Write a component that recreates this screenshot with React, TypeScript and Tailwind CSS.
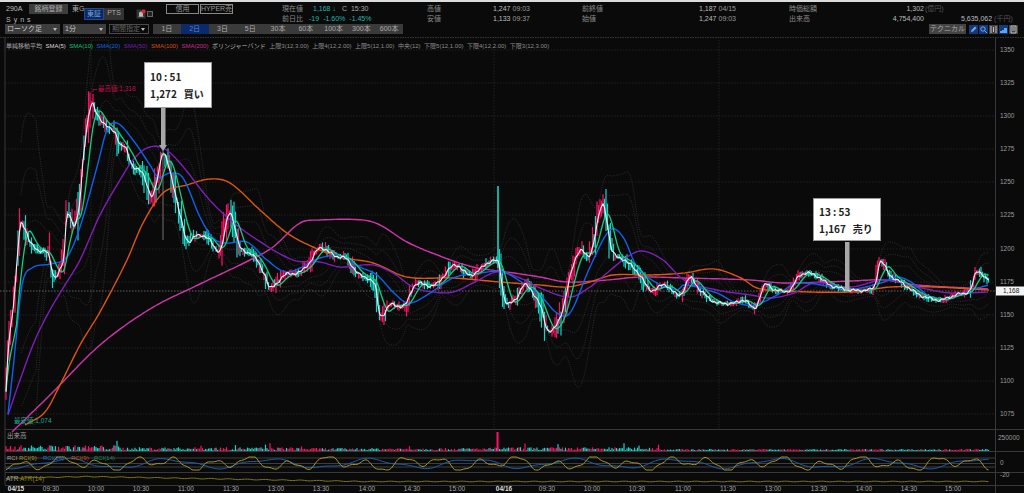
import React from "react";

type P = [number, number];

const white: P[] = [[5,414],[8,352],[14,300],[20,228],[24,226],[30,242],[38,250],[48,254],[54,276],[60,270],[64,256],[67,214],[75,226],[80,200],[83,160],[88,120],[92,104],[95,110],[105,125],[115,132],[120,145],[126,148],[133,167],[143,173],[152,197],[158,175],[163,153],[173,183],[180,215],[187,240],[196,236],[207,237],[220,250],[230,213],[240,247],[253,255],[265,275],[270,288],[285,275],[300,272],[310,262],[320,248],[335,256],[345,258],[360,275],[375,285],[380,315],[390,305],[405,305],[415,285],[435,285],[455,265],[470,275],[498,262],[505,300],[515,300],[525,285],[540,305],[548,330],[560,318],[572,270],[580,250],[590,255],[603,205],[612,250],[625,260],[640,275],[650,290],[665,285],[680,295],[690,278],[700,290],[715,302],[735,303],[745,300],[755,308],[765,285],[775,290],[790,290],[800,275],[815,275],[830,285],[850,290],[865,290],[875,285],[880,262],[890,275],[905,285],[920,295],[940,300],[955,295],[970,290],[977,272],[988,280]];
const blue: P[] = [[8,414],[14,360],[22,285],[32,268],[50,264],[67,257],[80,227],[97,167],[107,130],[117,123],[133,140],[150,165],[158,177],[170,173],[183,178],[200,217],[213,238],[227,243],[247,242],[267,260],[285,272],[300,268],[320,258],[340,256],[360,267],[377,275],[393,292],[408,303],[427,295],[453,278],[480,273],[503,272],[523,283],[540,295],[557,313],[570,313],[590,267],[610,230],[623,237],[637,267],[657,283],[677,290],[684,285],[717,293],[734,302],[754,305],[777,295],[797,283],[851,289],[884,282],[897,277],[911,282],[931,297],[951,298],[971,290],[989,285]];
const purple: P[] = [[8,415],[20,380],[35,340],[50,310],[65,285],[80,260],[100,215],[120,180],[133,160],[147,148],[163,148],[180,163],[207,197],[227,217],[253,237],[293,260],[320,262],[340,267],[373,265],[393,273],[413,287],[433,292],[453,292],[473,283],[497,272],[520,278],[540,288],[570,297],[590,287],[607,273],[627,257],[642,251],[663,260],[684,280],[717,290],[751,295],[770,298],[794,293],[814,283],[851,287],[884,280],[917,287],[950,293],[989,292]];
const orange: P[] = [[25,425],[45,412],[60,385],[80,345],[100,312],[127,260],[143,223],[163,193],[187,185],[210,179],[230,183],[260,210],[287,233],[313,247],[340,257],[373,263],[407,277],[453,278],[500,282],[540,285],[567,287],[590,282],[613,275],[650,275],[684,273],[714,269],[741,278],[757,288],[784,291],[851,292],[891,287],[934,287],[989,290]];
const pink: P[] = [[12,432],[50,395],[100,345],[150,309],[200,284],[250,260],[273,247],[300,223],[320,220],[363,220],[380,225],[407,242],[440,256],[473,267],[507,272],[540,277],[567,282],[607,280],[640,277],[684,278],[751,280],[784,283],[851,281],[884,280],[917,285],[989,289]];

function at(pts: P[], x: number): number {
  if (x <= pts[0][0]) return pts[0][1];
  const n = pts.length;
  if (x >= pts[n - 1][0]) return pts[n - 1][1];
  let i = 0;
  while (pts[i + 1][0] < x) i++;
  const p1 = pts[i], p2 = pts[i + 1];
  const p0 = pts[Math.max(i - 1, 0)], p3 = pts[Math.min(i + 2, n - 1)];
  const d = p2[0] - p1[0];
  const t = (x - p1[0]) / d;
  const m1 = ((p2[1] - p0[1]) / (p2[0] - p0[0] || 1)) * d;
  const m2 = ((p3[1] - p1[1]) / (p3[0] - p1[0] || 1)) * d;
  const t2 = t * t, t3 = t2 * t;
  return (2 * t3 - 3 * t2 + 1) * p1[1] + (t3 - 2 * t2 + t) * m1 + (-2 * t3 + 3 * t2) * p2[1] + (t3 - t2) * m2;
}

let seed = 7;
const rnd = () => {
  seed = (seed * 16807) % 2147483647;
  return (seed - 1) / 2147483646;
};

const xs: number[] = [];
for (let x = 6; x <= 989; x += 1.5) xs.push(x);
const ws = xs.map((x) => at(white, x));

const line = (a: number[], from = 0) =>
  a.map((y, i) => (i < from ? "" : `${i === from ? "M" : "L"}${xs[i].toFixed(1)} ${y.toFixed(1)}`)).join("");
const curve = (pts: P[]) => {
  let d = "";
  for (let x = pts[0][0]; x <= pts[pts.length - 1][0]; x += 2) d += `${d ? "L" : "M"}${x} ${at(pts, x).toFixed(1)}`;
  return d;
};
const avg = (k: number) =>
  ws.map((_, i) => {
    const s = ws.slice(Math.max(0, i - k), i + 1);
    return s.reduce((a, b) => a + b, 0) / s.length;
  });
const green = avg(7);
const jitter = ws.map((y, i) => y + Math.sin(i * 1.7) * 0.9 + Math.sin(i * 0.63) * 0.9);

const bands: string[] = [];
{
  const win = 20;
  const mean = ws.map((_, i) => {
    const s = ws.slice(Math.max(0, i - win), i + 1);
    return s.reduce((a, b) => a + b, 0) / s.length;
  });
  const dev = ws.map((_, i) => {
    const s = ws.slice(Math.max(0, i - win), i + 1);
    const v = s.reduce((a, b) => a + (b - mean[i]) ** 2, 0) / s.length;
    return Math.sqrt(v) + 1.5;
  });
  for (const k of [-3, -2, -1, 1, 2, 3]) {
    bands.push(line(mean.map((m, i) => Math.min(425, Math.max(40, m + k * dev[i]))), 10));
  }
}

const candles = xs.map((x, i) => {
  const y = ws[i];
  const slope = Math.abs(ws[Math.min(i + 1, ws.length - 1)] - y);
  const amp = Math.min(22, 3 + slope * 2.8) * (x < 660 ? 1.15 : 0.8);
  const up = i > 0 ? ws[i] <= ws[i - 1] : true;
  const isPink = rnd() < (up ? 0.85 : 0.22);
  const h1 = rnd() * amp + 0.8;
  const h2 = rnd() * amp + 0.8;
  return { x, y1: y - h1, y2: y + h2, c: isPink ? "#ff0f63" : "#14d6c8" };
});

const volumes = xs.map((x, i) => {
  let env = 1.2;
  if (x < 120) env = 5;
  else if (x < 300) env = 3;
  else if (x < 490) env = 2.2;
  else if (x < 660) env = 3;
  let h = 0.8 + rnd() * env;
  if (rnd() > 0.975 && x < 660) h += env * 1.4;
  return { x, h, c: candles[i].c };
});

const rsiY = xs.map((x) =>
  Math.max(457, Math.min(470, 463.5 + 4.6 * Math.sin(x * 0.165 + 1) + 3 * Math.sin(x * 0.071) + 1.4 * Math.sin(x * 0.39)))
);
const rsiB = xs.map((x) => Math.max(458, Math.min(469, 463.5 + 4.2 * Math.sin(x * 0.062 + 0.6) + 1.3 * Math.sin(x * 0.15))));
const atrY = xs.map((x) => {
  const base = x < 85 ? 478 - (x - 15) * 0.02 : 476.5 + Math.min(5, (x - 85) * 0.018);
  return base + Math.sin(x * 0.35) * 0.35;
});

const priceTicks: [string, number][] = [["1350",50],["1325",83],["1300",116],["1275",149],["1250",182],["1225",215],["1200",249],["1175",282],["1150",315],["1125",348],["1100",381],["1075",414]];
const times: [string, number][] = [["09:30",51],["10:00",96],["10:30",141],["11:00",186],["11:30",231],["13:00",276],["13:30",321],["14:00",367],["14:30",412],["15:00",457],["09:30",547],["10:00",592],["10:30",637],["11:00",683],["11:30",728],["13:00",773],["13:30",819],["14:00",864],["14:30",909],["15:00",953]];

function Cell({ children, className = "" }: { children: React.ReactNode; className?: string }) {
  return <div className={`whitespace-nowrap ${className}`}>{children}</div>;
}

function Val({ v, t }: { v: string; t: string }) {
  return (
    <Cell className="text-[#bdbdbd]">
      {v} <span className="text-[#9a9a9a]">{t}</span>
    </Cell>
  );
}

const tabs = ["1日", "2日", "3日", "5日", "30本", "60本", "100本", "300本", "600本"];

function Select({ label, w, dim }: { label: string; w: string; dim?: boolean }) {
  return (
    <div className={`${w} h-[10px] flex items-center justify-between px-[2px] ${dim ? "border border-[#4a4a4a] text-[#666]" : "bg-[#3d3d3d] text-[#c4c4c4]"}`}>
      <span>{label}</span>
      <span className="w-0 h-0 border-x-[2px] border-x-transparent border-t-[3px] border-t-[#bbb] mr-[1px]" />
    </div>
  );
}

function Legend() {
  return (
    <div className="absolute left-[6px] top-[5px] flex gap-[3.500px] text-[6px] leading-[9px] whitespace-nowrap text-[#8d8d8d]">
      <span className="text-[#a8a8a8]">単純移動平均</span>
      <span className="text-[#d8d8d8]">SMA(5)</span>
      <span className="text-[#0fc070]">SMA(10)</span>
      <span className="text-[#1464e0]">SMA(20)</span>
      <span className="text-[#7a1cb0]">SMA(50)</span>
      <span className="text-[#d8500c]">SMA(100)</span>
      <span className="text-[#c82a94]">SMA(200)</span>
      <span className="text-[#b8b8b8]">ボリンジャーバンド</span>
      <span>上限3(12,3.00)</span>
      <span>上限4(12,2.00)</span>
      <span>上限5(12,1.00)</span>
      <span>中央(12)</span>
      <span>下限5(12,1.00)</span>
      <span>下限4(12,2.00)</span>
      <span>下限3(12,3.00)</span>
    </div>
  );
}

function Callout({ className, time, text }: { className: string; time: string; text: string }) {
  return (
    <div className={`absolute bg-white border border-[#999] px-[5px] font-['Noto_Sans_CJK_JP','Noto_Sans',sans-serif] font-semibold text-[10px] text-[#222] flex flex-col justify-center gap-[4px] leading-[13px] ${className}`}>
      <div>{time}</div>
      <div className="whitespace-pre">{text}</div>
    </div>
  );
}

export default function App() {
  return (
    <div className="w-[1024px] h-[493px] overflow-hidden bg-[#0a0a0a] flex flex-col border-t-[2px] border-[#dcdcdc] text-[7px] leading-[10px] text-[#8a8a8a] font-['Liberation_Sans','Noto_Sans_CJK_JP',sans-serif]">
      <header className="h-[35px] shrink-0 flex flex-col">
        <div className="h-[21px] flex">
          <div className="w-[78px] ml-[6px] flex flex-col">
            <div className="flex items-center gap-[4px] mt-[2px] h-[10px] whitespace-nowrap">
              <span className="text-[#bbb] w-[19px] shrink-0">290A</span>
              <span className="w-[39px] shrink-0 h-[10px] bg-[#3d3d3d] text-center text-[#a8a8a8]">銘柄登録</span>
              <span className="text-[#aaa] shrink-0">東G</span>
            </div>
            <div className="mt-[1px] text-[#bbb] tracking-[3px]">Syns</div>
          </div>
          <div className="w-[40px] h-[12px] mt-[6px] flex text-center">
            <span className="w-[20px] bg-[#0b2a63] border border-[#234a8c] text-[#7aa0d8]">東証</span>
            <span className="w-[20px] bg-[#333] text-[#aaa]">PTS</span>
          </div>
          <div className="ml-[12px] mt-[6px] flex items-center gap-[1px] h-[12px]">
            <svg width="10" height="10" viewBox="0 0 10 10">
              <rect x="0.5" y="0.5" width="9" height="9" fill="#333" />
              <path d="M3 7V4.500a2 2 0 0 1 4 0V7l.8.8H2.200z" fill="#bbb" />
              <circle cx="7.500" cy="2.400" r="2" fill="#e8222e" />
            </svg>
            <span className="w-[6px] h-[6px] bg-[#222] border border-[#666]" />
          </div>
          <div className="ml-[13px] mt-[2px] flex gap-[1px] text-center text-[#999] whitespace-nowrap">
            <span className="w-[33px] h-[10px] border border-[#888] leading-[8px]">信用</span>
            <span className="w-[33px] h-[10px] border border-[#888] leading-[8px]">HYPER売</span>
          </div>
          <div className="ml-[49px] mt-[2px] grid grid-cols-[27px_118px_66px_89px_117px_90px_135px_1fr] grid-rows-[10px_10px] flex-1">
            <Cell>現在値</Cell>
            <Cell className="flex pl-[4px] text-[#20b8a8]">
              <span className="w-[29px]">1,168 ↓</span>
              <span className="text-[#a8a8a8]">C&nbsp;&nbsp;15:30</span>
            </Cell>
            <Cell>高値</Cell>
            <Val v="1,247" t="09:03" />
            <Cell>前終値</Cell>
            <Val v="1,187" t="04/15" />
            <Cell className="flex justify-between">
              <span>時価総額</span>
              <span className="text-[#bdbdbd]">1,302</span>
            </Cell>
            <Cell className="pl-[1px] text-[#555]">(億円)</Cell>

            <Cell>前日比</Cell>
            <Cell className="flex gap-[4px] text-[#20b8a8]">
              <span>-19</span>
              <span>-1.60%</span>
              <span>-1.45%</span>
            </Cell>
            <Cell>安値</Cell>
            <Val v="1,133" t="09:37" />
            <Cell>始値</Cell>
            <Val v="1,247" t="09:03" />
            <Cell className="flex justify-between">
              <span>出来高</span>
              <span className="text-[#bdbdbd]">4,754,400</span>
            </Cell>
            <Cell className="pl-[37px] text-[#bdbdbd]">
              5,635,062 <span className="text-[#555]">(千円)</span>
            </Cell>
          </div>
        </div>
        <div className="h-[10px] mt-[1px] flex items-center">
          <div className="ml-[5px] flex gap-[3px]">
            <Select label="ローソク足" w="w-[55px]" />
            <Select label="1分" w="w-[43px]" />
            <Select label="期間指定" w="w-[40px]" dim />
          </div>
          <div className="ml-[4px] w-[250px] h-[10px] bg-[#3a3a3a] flex text-center text-[#aaa]">
            {tabs.map((t) => (
              <span key={t} className={t === "2日" ? "flex-1 bg-[#0b2a6b] text-[#5c82c8]" : "flex-1"}>{t}</span>
            ))}
          </div>
          <div className="ml-auto mr-[6px] flex items-center gap-[1px]">
            <span className="w-[37px] h-[10px] mr-[2px] bg-[#444] text-center text-[#aaa]">テクニカル</span>
            <svg width="9" height="9" viewBox="0 0 9 9"><rect width="9" height="9" fill="#123a7a" /><path d="M2 7l.5-2L6 1.500 7.500 3 4 6.500z" fill="#6fa8e8" /></svg>
            <svg width="9" height="9" viewBox="0 0 9 9"><rect width="9" height="9" fill="#123a7a" /><circle cx="4" cy="4" r="2.200" fill="none" stroke="#6fa8e8" /><path d="M5.600 5.600L8 8" stroke="#6fa8e8" /></svg>
            <svg width="9" height="9" viewBox="0 0 9 9"><rect width="9" height="9" fill="#444" /><path d="M2 1v7M4.500 2v5M7 1v7" stroke="#bbb" /></svg>
            <svg width="9" height="9" viewBox="0 0 9 9"><rect width="9" height="9" fill="#123a7a" /><path d="M1 8V6h2V5h2V3h3v5z" fill="#58a8f0" /></svg>
            <svg width="9" height="9" viewBox="0 0 9 9"><rect width="9" height="9" fill="#444" /><path d="M2 1h5v7H2zM3 3h3M3 5h3" fill="none" stroke="#bbb" /></svg>
          </div>
        </div>
      </header>

      <main className="relative flex-1">
        <svg viewBox="0 37 1024 456" className="block w-full h-full" fontFamily="'Liberation Sans','Noto Sans CJK JP',sans-serif">
          <g stroke="#2c2c2c" strokeWidth="0.7" strokeDasharray="1.5 1.5">
            {priceTicks.map(([, y]) => <line key={y} x1="5" x2="995" y1={y} y2={y} />)}
            {[91, 494, 719].map((x) => <line key={x} x1={x} x2={x} y1="37" y2="430" />)}
          </g>
          <g stroke="#383838" strokeWidth="1">
            <line x1="0" x2="1024" y1="37.500" y2="37.500" strokeDasharray="1.500 1" />
            <line x1="5" x2="5" y1="37" y2="485" />
            <line x1="995.500" x2="995.500" y1="37" y2="493" />
            <line x1="5" x2="1024" y1="429.500" y2="429.500" />
            <line x1="5" x2="1024" y1="451.500" y2="451.500" />
            <line x1="5" x2="1024" y1="472.500" y2="472.500" />
            <line x1="5" x2="1024" y1="485.500" y2="485.500" />
          </g>
          <g fill="none" stroke="#3e3e3e" strokeWidth="0.7" strokeDasharray="1 1.300">
            {bands.map((d, i) => <path key={i} d={d} />)}
          </g>
          <line x1="0" x2="995" y1="291" y2="291" stroke="#9a9a9a" strokeWidth="0.6" strokeDasharray="1.500 1.500" />
          <g strokeWidth="1.200">
            {candles.map((c) => <line key={c.x} x1={c.x} x2={c.x} y1={c.y1} y2={c.y2} stroke={c.c} />)}
            <line x1="498" x2="498" y1="186" y2="268" stroke="#14d6c8" strokeWidth="1.600" />
          </g>
          <g fill="none" strokeLinejoin="round">
            <path d={curve(pink)} stroke="#d035a8" strokeWidth="1.400" />
            <path d={curve(orange)} stroke="#e0560f" strokeWidth="1.400" />
            <path d={curve(purple)} stroke="#7d1fb8" strokeWidth="1.400" />
            <path d={curve(blue)} stroke="#0f62ee" strokeWidth="1.400" />
            <path d={line(green)} stroke="#10d080" strokeWidth="1.300" />
            <path d={line(jitter)} stroke="#f2f2f2" strokeWidth="1.100" />
          </g>
          <line x1="163" x2="163" y1="150" y2="240" stroke="#8a8a8a" strokeWidth="0.8" />
          <rect x="161" y="107" width="4.500" height="39" fill="#a8a8a8" />
          <path d="M159 145h8l-4 6z" fill="#a8a8a8" />
          <rect x="845" y="242" width="4.500" height="48" fill="#a8a8a8" />

          <path d="M93 92v-2.500h4" stroke="#d0104e" fill="none" strokeWidth="0.700" />
          <text x="98" y="91" fontSize="6.500" fill="#c01048">最高値:1,318</text>
          <text x="14" y="423" fontSize="6.500" fill="#18a898">最安値:1,074</text>

          <g fontSize="6.500" fill="#9a9a9a">
            {priceTicks.map(([t, y]) => <text key={t} x="1000" y={y + 2.200}>{t}</text>)}
            <text x="998" y="440">250000</text>
            <text x="1000" y="465">0</text>
            <text x="1000" y="477">-20</text>
          </g>
          <rect x="996" y="286.500" width="28" height="9" fill="#f4f4f4" />
          <text x="1003" y="293" fontSize="6.500" fill="#222">1,168</text>

          <text x="7" y="438" fontSize="6.500" fill="#a0a0a0">出来高</text>
          {volumes.map((v) => <rect key={v.x} x={v.x - 0.6} y={451 - v.h} width="1.200" height={v.h} fill={v.c} />)}
          <rect x="496.500" y="432" width="2" height="19" fill="#ff0f63" />

          <g stroke="#4a4a4a" strokeWidth="0.800">
            <line x1="5" x2="995" y1="458" y2="458" />
            <line x1="5" x2="995" y1="463.500" y2="463.500" />
            <line x1="5" x2="995" y1="467" y2="467" />
          </g>
          <path d={line(rsiB)} stroke="#1c5ea8" strokeWidth="1" fill="none" />
          <path d={line(rsiY)} stroke="#a8962c" strokeWidth="1" fill="none" />
          <text fontSize="6" x="7" y="459.500" fill="#a0a0a0">RCI</text>
          <text fontSize="6" x="19" y="459.500" fill="#a8962c">RCI(9)</text>
          <text fontSize="6" x="43" y="459.500" fill="#2a70c0">RCI(26)</text>
          <text fontSize="6" x="71" y="459.500" fill="#c8521c">RCI(9)</text>
          <text fontSize="6" x="94" y="459.500" fill="#188858">RCI(14)</text>

          <path d={line(atrY)} stroke="#7a7418" strokeWidth="1" fill="none" />
          <text fontSize="6.500" x="6" y="481" fill="#a0a0a0">ATR</text>
          <text fontSize="6.500" x="20" y="481" fill="#8a8420">ATR(14)</text>

          <g fontSize="6.500" fill="#a8a8a8" textAnchor="middle">
            {times.map(([t, x]) => <text key={x} x={x} y="491">{t}</text>)}
          </g>
          <text x="16" y="491" fontSize="6.500" fontWeight="bold" fill="#dcdcdc" textAnchor="middle">04/15</text>
          <text x="504" y="491" fontSize="6.500" fontWeight="bold" fill="#dcdcdc" textAnchor="middle">04/16</text>
        </svg>

        <Legend />
        <Callout className="left-[144px] top-[25px] w-[68px] h-[46px]" time="10 : 51" text="1,272   買い" />
        <Callout className="left-[813px] top-[161px] w-[68px] h-[43px]" time="13 : 53" text="1,167   売り" />
      </main>
    </div>
  );
}
